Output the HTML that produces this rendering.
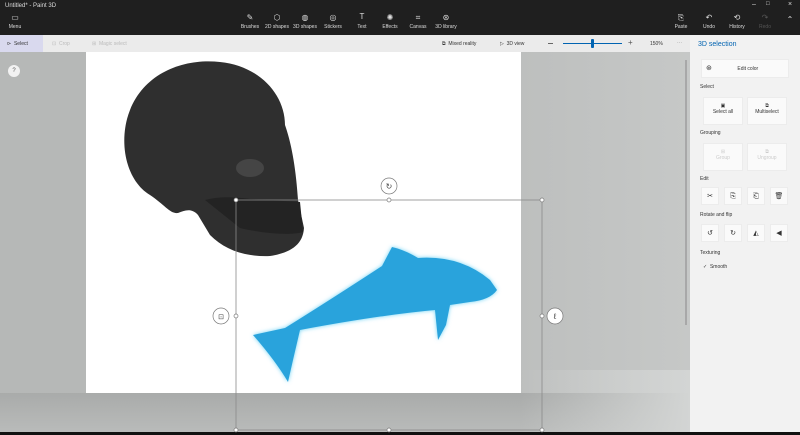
<!DOCTYPE html>
<html><head><style>
*{margin:0;padding:0;box-sizing:border-box}
body{width:800px;height:435px;overflow:hidden;font-family:"Liberation Sans",sans-serif;background:#111;position:relative}
.abs{position:absolute}
.tb{color:#ddd;font-size:5px;text-align:center;width:30px}
.ic{color:#ddd;font-size:8px;text-align:center;width:30px}
.lbl{font-size:5px;color:#333}
.btn{position:absolute;background:#fafafa;border:1px solid #ececec;font-size:5px;color:#333;text-align:center}
</style></head><body>
<div class="abs" style="left:0;top:0;width:800px;height:35px;background:#1f1f1f"></div>
<div class="abs" style="left:5px;top:3px;font-size:6px;color:#ddd">Untitled* - Paint 3D</div>
<div class="abs" style="left:752px;top:1px;font-size:7px;color:#ddd">–</div>
<div class="abs" style="left:766px;top:1px;font-size:6px;color:#ddd">□</div>
<div class="abs" style="left:788px;top:1px;font-size:7px;color:#ddd">×</div>
<div class="abs ic" style="left:0;top:13px">▭</div><div class="abs tb" style="left:0;top:24px">Menu</div>
<div class="abs ic" style="left:235px;top:13px">✎</div><div class="abs tb" style="left:235px;top:24px">Brushes</div>
<div class="abs ic" style="left:262px;top:13px">⬡</div><div class="abs tb" style="left:262px;top:24px">2D shapes</div>
<div class="abs ic" style="left:290px;top:13px">◍</div><div class="abs tb" style="left:290px;top:24px">3D shapes</div>
<div class="abs ic" style="left:318px;top:13px">◎</div><div class="abs tb" style="left:318px;top:24px">Stickers</div>
<div class="abs ic" style="left:347px;top:12px">T</div><div class="abs tb" style="left:347px;top:24px">Text</div>
<div class="abs ic" style="left:375px;top:13px">✺</div><div class="abs tb" style="left:375px;top:24px">Effects</div>
<div class="abs ic" style="left:403px;top:13px">⌗</div><div class="abs tb" style="left:403px;top:24px">Canvas</div>
<div class="abs ic" style="left:431px;top:13px">⊛</div><div class="abs tb" style="left:431px;top:24px">3D library</div>
<div class="abs ic" style="left:666px;top:13px">⎘</div><div class="abs tb" style="left:666px;top:24px">Paste</div>
<div class="abs ic" style="left:694px;top:13px">↶</div><div class="abs tb" style="left:694px;top:24px">Undo</div>
<div class="abs ic" style="left:722px;top:13px">⟲</div><div class="abs tb" style="left:722px;top:24px">History</div>
<div class="abs ic" style="left:750px;top:13px;color:#555">↷</div><div class="abs tb" style="left:750px;top:24px;color:#555">Redo</div>
<div class="abs ic" style="left:775px;top:15px">⌃</div>
<div class="abs" style="left:0;top:35px;width:690px;height:17px;background:#ebebeb"></div>
<div class="abs" style="left:0;top:35px;width:43px;height:17px;background:#d9d9ee"></div>
<div class="abs lbl" style="left:7px;top:41px">⊳ &nbsp;Select</div>
<div class="abs lbl" style="left:52px;top:41px;color:#bbb">⊡ &nbsp;Crop</div>
<div class="abs lbl" style="left:92px;top:41px;color:#bbb">⊞ &nbsp;Magic select</div>
<div class="abs lbl" style="left:442px;top:41px">⧉ &nbsp;Mixed reality</div>
<div class="abs lbl" style="left:500px;top:41px">▷ &nbsp;3D view</div>
<div class="abs" style="left:548px;top:43px;width:5px;height:1px;background:#666"></div>
<div class="abs" style="left:563px;top:43px;width:59px;height:1px;background:#0063b1"></div>
<div class="abs" style="left:591px;top:39px;width:3px;height:9px;background:#0063b1;border-radius:1px"></div>
<div class="abs lbl" style="left:628px;top:38px;font-size:8px;color:#555">+</div>
<div class="abs lbl" style="left:650px;top:41px">150%</div>
<div class="abs lbl" style="left:677px;top:40px;color:#888">···</div>
<div class="abs" style="left:0;top:52px;width:690px;height:380px;background:linear-gradient(to right,#b6b8b7 0,#b6b8b7 86px,#bdbfbe 521px,#c6c8c7 690px)"></div>
<div class="abs" style="left:0;top:393px;width:690px;height:39px;background:linear-gradient(#a9abaa,#b9bbba)"></div>
<div class="abs" style="left:520px;top:370px;width:170px;height:62px;background:linear-gradient(to right,rgba(220,222,221,0),#d3d5d4)"></div>
<div class="abs" style="left:86px;top:52px;width:435px;height:341px;background:#fff"></div>
<div class="abs" style="left:685px;top:60px;width:2px;height:265px;background:#a8a8a8"></div>
<div class="abs" style="left:8px;top:65px;width:12px;height:12px;border-radius:50%;background:#f2f2f2;font-size:6px;text-align:center;line-height:12px;color:#555">?</div>
<svg class="abs" style="left:0;top:0" width="690" height="435">
<defs><filter id="g"><feGaussianBlur stdDeviation="2"/></filter></defs>
<path d="M150,195 C125,180 118,140 130,110 C145,72 185,58 220,62 C260,66 285,95 285,125 C292,145 296,170 298,200 L304,228 C303,245 290,253 270,256 C245,257 225,250 210,235 L198,215 C192,208 185,210 178,213 C170,214 165,205 150,195 Z" fill="#2f2f2f"/>
<path d="M205,200 C220,196 235,197 250,199 L300,202 L303,232 C290,236 260,233 240,228 Z" fill="#232323"/>
<ellipse cx="250" cy="168" rx="14" ry="9" fill="#454545"/>
<path d="M253,335 L285,328 Q330,300 382,266 L392,247 Q405,250 418,258 Q460,255 490,280 L497,290 Q490,300 470,302 L450,305 L446,325 L438,340 L435,310 Q380,315 300,330 L293,360 L288,382 Q275,360 253,335 Z" fill="#6fd3f5" filter="url(#g)"/>
<path d="M253,335 L285,328 Q330,300 382,266 L392,247 Q405,250 418,258 Q460,255 490,280 L497,290 Q490,300 470,302 L450,305 L446,325 L438,340 L435,310 Q380,315 300,330 L293,360 L288,382 Q275,360 253,335 Z" fill="#29a3dc"/>
<rect x="236" y="200" width="306" height="230" stroke="#8a8a8a" stroke-width="0.8" fill="none"/>
<g fill="#fff" stroke="#777" stroke-width="0.7">
<circle cx="236" cy="200" r="2"/><circle cx="389" cy="200" r="2"/><circle cx="542" cy="200" r="2"/>
<circle cx="236" cy="316" r="2"/><circle cx="542" cy="316" r="2"/>
<circle cx="236" cy="430" r="2"/><circle cx="389" cy="430" r="2"/><circle cx="542" cy="430" r="2"/>
<circle cx="389" cy="186" r="8"/><circle cx="221" cy="316" r="8"/><circle cx="555" cy="316" r="8"/>
</g>
<text x="389" y="189" font-size="8" text-anchor="middle" fill="#444">↻</text>
<text x="221" y="319" font-size="7" text-anchor="middle" fill="#444">⊡</text>
<text x="555" y="319" font-size="8" text-anchor="middle" fill="#444">ℓ</text>
</svg>
<div class="abs" style="left:690px;top:35px;width:110px;height:397px;background:#f2f2f2"></div>
<div class="abs" style="left:698px;top:41px;font-size:7px;color:#0063b1">3D selection</div>
<div class="btn" style="left:701px;top:59px;width:88px;height:19px;line-height:18px">&nbsp;&nbsp;&nbsp;&nbsp;Edit color</div>
<div class="abs lbl" style="left:706px;top:64px;font-size:7px">⊛</div>
<div class="abs lbl" style="left:700px;top:84px">Select</div>
<div class="btn" style="left:703px;top:97px;width:40px;height:28px;padding-top:5px">▣<br>Select all</div>
<div class="btn" style="left:747px;top:97px;width:40px;height:28px;padding-top:5px">⧉<br>Multiselect</div>
<div class="abs lbl" style="left:700px;top:130px">Grouping</div>
<div class="btn" style="left:703px;top:143px;width:40px;height:28px;padding-top:5px;color:#ccc">⊞<br>Group</div>
<div class="btn" style="left:747px;top:143px;width:40px;height:28px;padding-top:5px;color:#ccc">⧉<br>Ungroup</div>
<div class="abs lbl" style="left:700px;top:176px">Edit</div>
<div class="btn" style="left:701px;top:187px;width:18px;height:18px;line-height:17px;font-size:7px">✂</div>
<div class="btn" style="left:724px;top:187px;width:18px;height:18px;line-height:17px;font-size:7px">⎘</div>
<div class="btn" style="left:747px;top:187px;width:18px;height:18px;line-height:17px;font-size:7px">⎗</div>
<div class="btn" style="left:770px;top:187px;width:18px;height:18px;line-height:17px;font-size:7px">🗑</div>
<div class="abs lbl" style="left:700px;top:212px">Rotate and flip</div>
<div class="btn" style="left:701px;top:224px;width:18px;height:18px;line-height:17px;font-size:7px">↺</div>
<div class="btn" style="left:724px;top:224px;width:18px;height:18px;line-height:17px;font-size:7px">↻</div>
<div class="btn" style="left:747px;top:224px;width:18px;height:18px;line-height:17px;font-size:7px">◭</div>
<div class="btn" style="left:770px;top:224px;width:18px;height:18px;line-height:17px;font-size:7px">◀</div>
<div class="abs lbl" style="left:700px;top:250px">Texturing</div>
<div class="abs lbl" style="left:703px;top:264px">✓ &nbsp;Smooth</div>
</body></html>
